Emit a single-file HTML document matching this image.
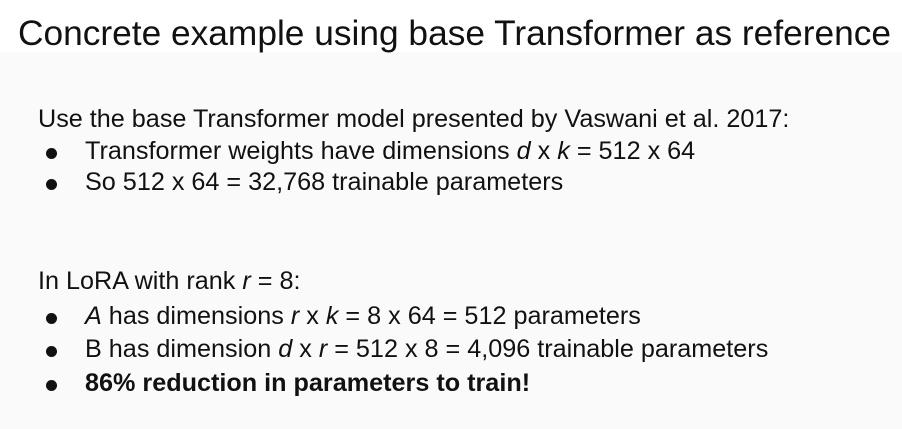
<!DOCTYPE html>
<html><head><meta charset="utf-8"><style>
html,body{margin:0;padding:0;}
body{width:902px;height:429px;background:#fafafa;position:relative;overflow:hidden;font-family:"Liberation Sans",sans-serif;color:#111;}
.top{position:absolute;left:0;top:0;width:902px;height:52px;background:#fff;}
.t{position:absolute;white-space:nowrap;}
.title{left:18px;top:14px;font-size:35.3px;}
.l{font-size:25.2px;left:38px;}
.b{font-size:25.2px;left:85px;}
.d{position:absolute;left:46px;width:11px;height:11px;border-radius:50%;background:#111;}
</style></head><body>
<div class="top"></div>
<div class="t title">Concrete example using base Transformer as reference</div>
<div class="t l" style="top:105px">Use the base Transformer model presented by Vaswani et al. 2017:</div>
<div class="d" style="top:148px"></div>
<div class="t b" style="top:137px">Transformer weights have dimensions <i>d</i> x <i>k</i> = 512 x 64</div>
<div class="d" style="top:179px"></div>
<div class="t b" style="top:168px">So 512 x 64 = 32,768 trainable parameters</div>
<div class="t l" style="top:267px">In LoRA with rank <i>r</i> = 8:</div>
<div class="d" style="top:313px"></div>
<div class="t b" style="top:302px"><i>A</i> has dimensions <i>r</i> x <i>k</i> = 8 x 64 = 512 parameters</div>
<div class="d" style="top:346px"></div>
<div class="t b" style="top:335px">B has dimension <i>d</i> x <i>r</i> = 512 x 8 = 4,096 trainable parameters</div>
<div class="d" style="top:380px"></div>
<div class="t b" style="top:369px"><b>86% reduction in parameters to train!</b></div>
</body></html>
